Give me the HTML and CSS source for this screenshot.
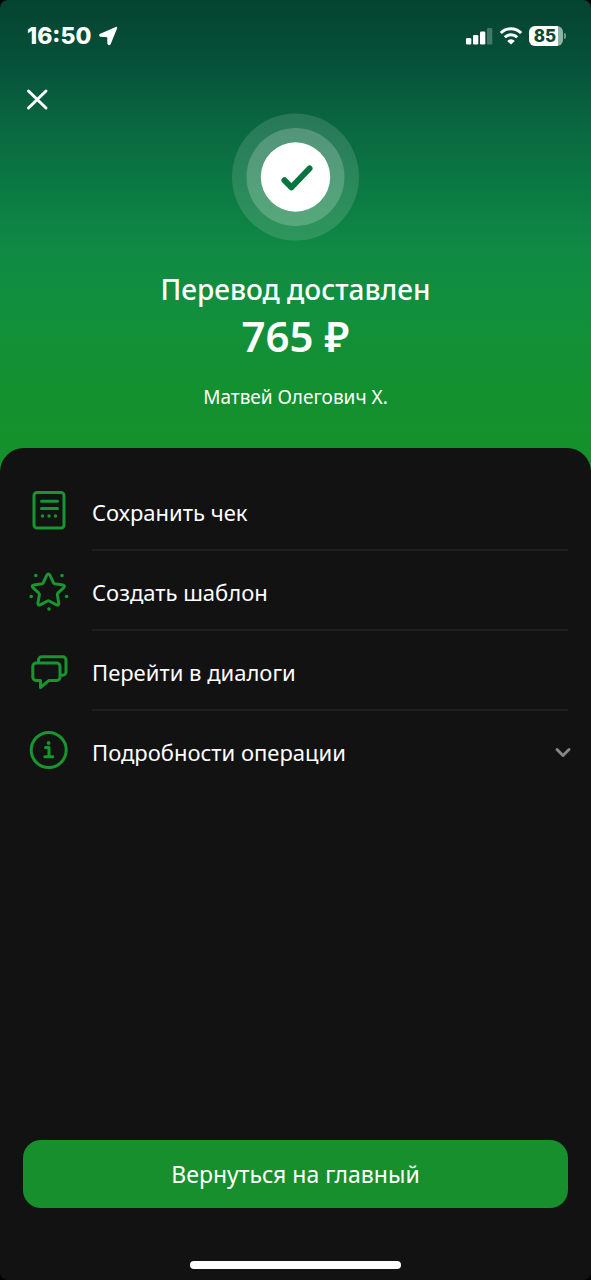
FILE: index.html
```html
<!DOCTYPE html>
<html lang="ru">
<head>
<meta charset="utf-8">
<meta name="viewport" content="width=device-width, initial-scale=1">
<title>Перевод доставлен</title>
<link rel="stylesheet" href="styles.css">
</head>
<body>
<div class="screen">
  <div class="status">
    <div class="status-left">
      <span class="time">16:50</span>
      <svg class="location" viewBox="0 0 20 20" aria-hidden="true"><path d="M18.200 1.800 2.600 8.600q-1 .7 0 1.100l6.900.5q.7 0 .7.800l.2 6.600q.5 1 1.300.2z"/></svg>
    </div>
    <div class="status-right">
      <svg class="signal" viewBox="0 0 27 18" aria-hidden="true">
        <rect x="0" y="11" width="5.300" height="6.500" rx="1.300"/><rect x="7" y="8" width="5.300" height="9.500" rx="1.300"/><rect x="14" y="4.500" width="5.300" height="13" rx="1.300"/><rect class="dim" x="21" y="1" width="5.300" height="16.500" rx="1.300"/>
      </svg>
      <svg class="wifi" viewBox="0 0 24 18" aria-hidden="true">
        <path class="arc" d="M1.800 6a14.400 14.400 0 0 1 20.400 0"/><path class="arc" d="M5.800 10.300a8.700 8.700 0 0 1 12.400 0"/><path d="M12 17.600 8.200 13.900a5.400 5.400 0 0 1 7.600 0z"/>
      </svg>
      <div class="battery"><span class="battery-level">85</span><span class="battery-tip"></span></div>
    </div>
  </div>

  <header class="hero">
    <nav class="nav">
      <button class="close" type="button" aria-label="Закрыть">
        <svg viewBox="0 0 28 28" aria-hidden="true"><path d="M5.500 6l17.500 17M23 6l-17.500 17"/></svg>
      </button>
    </nav>
    <svg class="badge" viewBox="0 0 128 128" aria-hidden="true">
      <circle class="ring" cx="63.500" cy="64" r="63.500"/><circle class="ring-inner" cx="63.500" cy="64" r="49"/><circle class="disc" cx="63.500" cy="64" r="34.700"/>
      <path class="check" d="M52.500 67.300l7 7L77.500 55.500"/>
    </svg>
    <h1 class="title">Перевод доставлен</h1>
    <p class="amount">765 ₽</p>
    <p class="recipient">Матвей Олегович Х.</p>
  </header>

  <main class="sheet">
    <ul class="actions">
      <li><button class="action" type="button">
        <svg class="icon" viewBox="0 0 40 40" aria-hidden="true"><rect x="5" y="1.500" width="30" height="35.500" rx="3"/><path d="M12.500 10.300h16M12.500 17.600h16"/><g class="dots"><circle cx="13.500" cy="25" r="1.700"/><circle cx="20" cy="25" r="1.700"/><circle cx="26.500" cy="25" r="1.700"/></g></svg>
        <span class="label">Сохранить чек</span></button></li>
      <li><button class="action" type="button">
        <svg class="icon" viewBox="0 0 40 40" aria-hidden="true"><path d="M18.300 4.300q1.700-2.600 3.300 0l3.500 7.500q.4.800 1.300 1l8 1.100q2.700.6 1 2.700l-6 5.600q-.7.700-.5 1.600l1.500 8.200q.2 2.800-2.300 1.900l-7.300-3.900q-.9-.4-1.800 0l-7.200 3.900q-2.500.9-2.300-1.900l1.500-8.200q.2-.9-.5-1.600l-6-5.600q-1.700-2.100 1-2.700l8-1.100q.9-.2 1.300-1z" transform="translate(-.6 0)"/><g class="dots"><circle cx="6.800" cy="4.500" r="1.800"/><circle cx="33" cy="4.500" r="1.800"/><circle cx="2.200" cy="25.500" r="1.800"/><circle cx="37.600" cy="25.500" r="1.800"/><circle cx="20" cy="38" r="1.800"/></g></svg>
        <span class="label">Создать шаблон</span></button></li>
      <li><button class="action" type="button">
        <svg class="icon" viewBox="0 0 40 40" aria-hidden="true"><path d="M9.500 11.500V9a3.200 3.200 0 0 1 3.200-3.200h21.100A3.200 3.200 0 0 1 37 9v12a3.200 3.200 0 0 1-3.200 3.200H32"/><path d="M7 12h20.800a3.200 3.200 0 0 1 3.200 3.200v11a3.200 3.200 0 0 1-3.200 3.200H20L11.500 36.500v-7.100H7a3.200 3.200 0 0 1-3.200-3.200v-11A3.200 3.200 0 0 1 7 12z"/></svg>
        <span class="label">Перейти в диалоги</span></button></li>
      <li><button class="action" type="button" aria-expanded="false">
        <svg class="icon" viewBox="0 0 40 40" aria-hidden="true"><circle cx="19.700" cy="19" r="17.500"/><path d="M16.500 16.500h3.500V25.500M15.800 25.800h8"/><g class="dots"><circle cx="19.600" cy="12" r="1.900"/></g></svg>
        <span class="label">Подробности операции</span>
        <svg class="chevron" viewBox="0 0 18 14" aria-hidden="true"><path d="M3 5.500l6 6 6-6"/></svg></button></li>
    </ul>
    <button class="primary" type="button">Вернуться на главный</button>
    <div class="home-indicator"></div>
  </main>
</div>
</body>
</html>
```
FILE: styles.css
```css
* { box-sizing: border-box; }
body { margin: 0; background: #000; color: #fff; font-family: "Noto Sans", "Open Sans", sans-serif; }
h1, p, ul { margin: 0; padding: 0; }
button { margin: 0; padding: 0; border: 0; background: none; color: inherit; font: inherit; cursor: pointer; }
svg { display: block; flex: none; }

.screen {
  display: flex;
  flex-direction: column;
  min-height: 100vh;
  border-radius: 8px;
  overflow: hidden;
  background: linear-gradient(#05432f 0, #06503a 60px, #0a6540 120px, #0b7843 185px, #108a45 250px, #128f3d 310px, #13902f 390px, #15912b 450px, #15912b 480px, #121212 480px);
}

.status { display: flex; justify-content: space-between; align-items: center; height: 72px; padding: 0 25px 0 27px; }
.status-left, .status-right { display: flex; align-items: center; }
.status-left { gap: 7px; }
.status-right { gap: 6px; }
.time { font: 800 23px/28px Inter, sans-serif; }
.location { width: 20px; height: 20px; fill: #fff; stroke: #fff; stroke-width: 2; stroke-linejoin: round; }
.signal { width: 27px; height: 18px; fill: #fff; }
.dim { opacity: 0.25; }
.wifi { width: 24px; height: 18px; fill: #fff; }
.arc { fill: none; stroke: #fff; stroke-width: 3; }
.battery { display: flex; align-items: center; gap: 1px; }
.battery-level {
  width: 34px;
  padding-right: 2px;
  border-radius: 6px;
  background: linear-gradient(90deg, #fff 85%, #8db3a3 85%);
  color: #064a35;
  font: 800 17px/20px Inter, sans-serif;
  text-align: center;
}
.battery-tip { width: 2px; height: 6px; border-radius: 0 2px 2px 0; background: #6f9d8b; }

.hero { display: flex; flex-direction: column; align-items: center; padding-bottom: 37px; text-align: center; }
.nav { align-self: stretch; padding: 13px 23px 0; }
.close { display: block; width: 28px; height: 28px; }
.close svg { fill: none; stroke: #fff; stroke-width: 3; stroke-linecap: round; }
.badge { width: 128px; height: 128px; }
.ring { fill: #fff; fill-opacity: 0.13; }
.ring-inner { fill: #fff; fill-opacity: 0.2; }
.disc { fill: #fff; }
.check { fill: none; stroke: #08743f; stroke-width: 6; stroke-linecap: round; stroke-linejoin: round; }
.title { margin-top: 28px; font-size: 28px; line-height: 40px; font-weight: 500; }
.amount { font-size: 42px; line-height: 54px; font-weight: 600; }
.recipient { margin-top: 20px; font-size: 19px; line-height: 28px; }

.sheet { display: flex; flex: 1; flex-direction: column; padding: 23px 23px 11px; border-radius: 24px 24px 0 0; background: #121212; }
.actions { list-style: none; }
.action { display: flex; align-items: center; width: 100%; height: 80px; padding-left: 6px; gap: 23px; text-align: left; }
.icon { width: 40px; height: 40px; fill: none; stroke: #1a942f; stroke-width: 3; stroke-linecap: round; stroke-linejoin: round; }
.dots { fill: #1a942f; stroke: none; }
.label { display: flex; flex: 1; align-items: center; height: 80px; padding-top: 3px; border-bottom: 2px solid #1f1f1f; font-size: 22px; line-height: 30px; }
li:last-child .label { border-color: transparent; }
.chevron { width: 18px; height: 14px; margin-right: -4px; fill: none; stroke: #858585; stroke-width: 3; stroke-linecap: round; stroke-linejoin: round; }
.primary { margin-top: auto; padding: 19px 16px; border-radius: 18px; background: #178f2c; font-size: 23px; line-height: 30px; }
.home-indicator { align-self: center; width: 36%; min-width: 211px; height: 8px; margin-top: 53px; border-radius: 4px; background: #fff; }
```
